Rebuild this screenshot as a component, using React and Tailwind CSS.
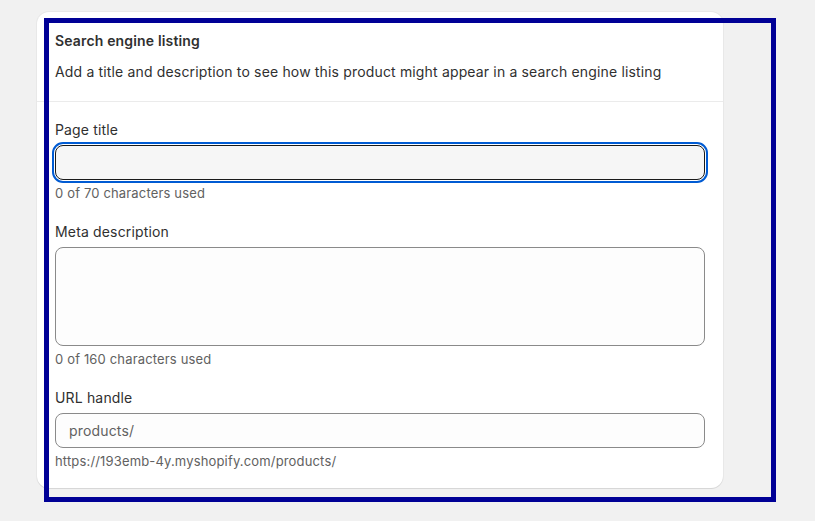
import React from "react";

const Field = ({ label, children, help }) => (
  <div className="flex flex-col">
    <label className="text-[14px] leading-[20px] text-[#303030] mb-[5px]">
      {label}
    </label>
    {children}
    <p className="mt-[4px] text-[13px] leading-[18px] text-[#616161]">{help}</p>
  </div>
);

const App = () => {
  return (
    <div
      className="relative min-h-screen bg-[#f1f1f1] pt-[12px] pl-[37px] tracking-[0.01em]"
      style={{ fontFamily: "Inter, 'Noto Sans', sans-serif" }}
    >
      <div className="w-[686px] bg-white rounded-[12px] shadow-[0_1px_0_0_rgba(26,26,26,0.08),0_0_0_1px_rgba(26,26,26,0.04)]">
        <div className="px-[18px] pt-[19px] pb-[19px] border-b border-[#ebebeb]">
          <h2 className="text-[14px] leading-[20px] font-semibold text-[#303030]">
            Search engine listing
          </h2>
          <p className="mt-[11px] text-[14px] leading-[20px] text-[#303030]">
            Add a title and description to see how this product might appear in a search engine listing
          </p>
        </div>

        <div className="px-[18px] pt-[18px] pb-[18px] flex flex-col gap-[20px]">
          <Field label="Page title" help="0 of 70 characters used">
            <input
              type="text"
              className="h-[35px] w-full rounded-[8px] bg-[#f6f6f6] border border-[#1a1a1a] outline-2 outline-offset-1 outline-[#005bd3] px-[12px] text-[14px]"
            />
          </Field>

          <Field label="Meta description" help="0 of 160 characters used">
            <textarea className="h-[99px] w-full resize-none rounded-[8px] bg-[#fdfdfd] border border-[#8a8a8a] px-[12px] py-[6px] text-[14px] outline-none" />
          </Field>

          <Field label="URL handle" help="https://193emb-4y.myshopify.com/products/">
            <div className="h-[35px] w-full rounded-[8px] bg-[#fdfdfd] border border-[#8a8a8a] flex items-center px-[13px]">
              <span className="text-[14px] text-[#616161]">products/</span>
              <input type="text" className="flex-1 bg-transparent outline-none text-[14px]" />
            </div>
          </Field>
        </div>
      </div>

      <div className="absolute left-[44px] top-[18px] w-[732px] h-[484px] border-[5px] border-[#000096] pointer-events-none" />
    </div>
  );
};

export default App;
